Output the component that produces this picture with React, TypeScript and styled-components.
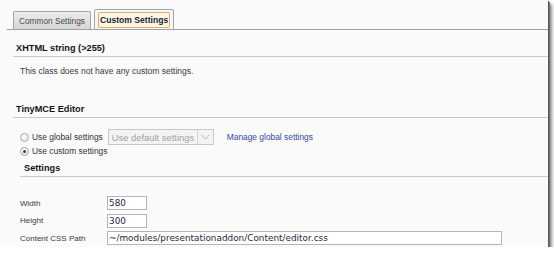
import styled, { createGlobalStyle } from "styled-components";

const GlobalStyle = createGlobalStyle`
    html, body {
        margin: 0;
        padding: 0;
        background: #ffffff;
    }
    body {
        font-family: "Liberation Sans", Arial, sans-serif;
        color: #333333;
    }
`;

export default function App() {
    return (
        <>
            <GlobalStyle />
            <Frame>
                <TabBar>
                    <Tab>Common Settings</Tab>
                    <Tab $active>
                        <TabFocus>Custom Settings</TabFocus>
                    </Tab>
                </TabBar>

                <Heading $top={13}>XHTML string (&gt;255)</Heading>
                <Note>This class does not have any custom settings.</Note>

                <Heading $top={27}>TinyMCE Editor</Heading>
                <Options>
                    <OptionRow $height={16}>
                        <Radio />
                        <OptionLabel>Use global settings</OptionLabel>
                        <Select>
                            <SelectText>Use default settings</SelectText>
                            <SelectArrow>
                                <svg width="9" height="6" viewBox="0 0 9 6">
                                    <path d="M0.5 0.8 L4.5 5 L8.5 0.8" fill="none" stroke="#b8b8b8" strokeWidth="1" />
                                </svg>
                            </SelectArrow>
                        </Select>
                        <Link href="#">Manage global settings</Link>
                    </OptionRow>
                    <OptionRow $height={14}>
                        <Radio $checked />
                        <OptionLabel>Use custom settings</OptionLabel>
                    </OptionRow>
                </Options>

                <SubHeading>Settings</SubHeading>
                <Form>
                    <FieldLabel>Width</FieldLabel>
                    <Field $width={40}>580</Field>
                    <FieldLabel>Height</FieldLabel>
                    <Field $width={40}>300</Field>
                    <FieldLabel>Content CSS Path</FieldLabel>
                    <Field $width={395}>~/modules/presentationaddon/Content/editor.css</Field>
                </Form>
            </Frame>
        </>
    );
}

const Frame = styled.div`
    width: 548px;
    height: 247px;
    background: #fafafa;
    overflow: hidden;
    box-shadow: 1px 1px 0 #5a5a5a, 2px 2px 0 #6a6a6a, 4px 4px 3px rgba(0, 0, 0, 0.45);
`;

const TabBar = styled.div`
    display: flex;
    align-items: flex-end;
    gap: 3px;
    height: 30px;
    margin-left: 7px;
    padding-left: 6px;
    box-sizing: border-box;
    border-bottom: 1px solid #a0a0a0;
`;

const Tab = styled.div<{ $active?: boolean }>`
    display: flex;
    align-items: center;
    box-sizing: border-box;
    height: ${(p) => (p.$active ? "20px" : "18px")};
    padding: 0 ${(p) => (p.$active ? "3px" : "5px")};
    border: 1px solid #a4a4a4;
    border-bottom: none;
    border-radius: 2px 2px 0 0;
    background: ${(p) =>
        p.$active ? "#f6f6f6" : "linear-gradient(#ececec, #d6d6d6)"};
    font-size: ${(p) => (p.$active ? "8.6px" : "8.3px")};
    font-weight: ${(p) => (p.$active ? 700 : 400)};
    color: ${(p) => (p.$active ? "#1e1e1e" : "#4a4a4a")};
    white-space: nowrap;
`;

const TabFocus = styled.span`
    display: flex;
    align-items: center;
    height: 14px;
    padding: 0 1px;
    border: 1px solid #e3ad5a;
    border-radius: 2px;
    background: #fbf6ea;
`;

const Heading = styled.div<{ $top: number }>`
    margin-left: 13px;
    padding: ${(p) => p.$top}px 0 2px 3px;
    border-bottom: 1px solid #c9c9c9;
    font-size: 9.2px;
    line-height: 11px;
    font-weight: 700;
    color: #151515;
`;

const SubHeading = styled(Heading).attrs({ $top: 5 })`
    margin-left: 20px;
    padding-left: 4px;
`;

const Note = styled.div`
    padding: 9px 0 0 20px;
    font-size: 8.5px;
    line-height: 11px;
    color: #3a3a3a;
`;

const Options = styled.div`
    display: flex;
    flex-direction: column;
    margin-top: 11px;
    padding-left: 20px;
`;

const OptionRow = styled.div<{ $height: number }>`
    display: flex;
    align-items: center;
    height: ${(p) => p.$height}px;
    margin-top: ${(p) => (p.$height === 14 ? "-1px" : "0")};
`;

const Radio = styled.span<{ $checked?: boolean }>`
    position: relative;
    width: 9px;
    height: 9px;
    box-sizing: border-box;
    border: 1px solid #a9a9a9;
    border-radius: 50%;
    background: radial-gradient(circle at 40% 35%, #ffffff, #dcdcdc);
    &::after {
        content: "";
        display: ${(p) => (p.$checked ? "block" : "none")};
        position: absolute;
        left: 2px;
        top: 2px;
        width: 3px;
        height: 3px;
        border-radius: 50%;
        background: #3c3c3c;
    }
`;

const OptionLabel = styled.span`
    margin-left: 3px;
    font-size: 8.4px;
    color: #333333;
    white-space: nowrap;
`;

const Select = styled.div`
    display: flex;
    align-items: stretch;
    width: 106px;
    height: 16px;
    margin-left: 5px;
    box-sizing: border-box;
    border: 1px solid #c8c8c8;
    background: #f3f3f3;
`;

const SelectText = styled.span`
    flex: 1;
    display: flex;
    align-items: center;
    padding-left: 3px;
    font-size: 9.4px;
    color: #a2a2a2;
    white-space: nowrap;
`;

const SelectArrow = styled.span`
    display: flex;
    align-items: center;
    justify-content: center;
    width: 15px;
    border-left: 1px solid #d4d4d4;
`;

const Link = styled.a`
    margin-left: 13px;
    font-size: 8.4px;
    color: #34489a;
    text-decoration: none;
    white-space: nowrap;
`;

const Form = styled.div`
    display: grid;
    grid-template-columns: 87px auto;
    row-gap: 3.5px;
    align-items: center;
    margin-top: 19px;
    padding-left: 20px;
`;

const FieldLabel = styled.span`
    font-size: 8px;
    color: #3a3a3a;
    white-space: nowrap;
`;

const Field = styled.div<{ $width: number }>`
    display: flex;
    align-items: center;
    width: ${(p) => p.$width}px;
    height: 14px;
    box-sizing: border-box;
    padding-left: 1px;
    border: 1px solid #b4b4b4;
    background: #ffffff;
    font-family: "DejaVu Sans", Verdana, sans-serif;
    font-size: 8.9px;
    color: #2b2540;
    white-space: nowrap;
`;
